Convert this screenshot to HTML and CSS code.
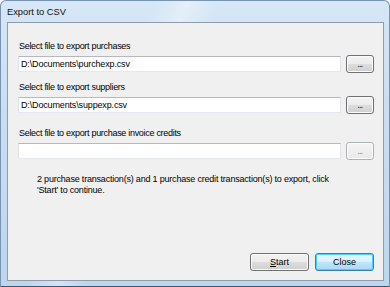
FILE: index.html
```html
<!DOCTYPE html>
<html lang="en">
<head>
  <meta charset="UTF-8">
  <title>Export to CSV</title>
  <meta name="viewport" content="width=device-width, initial-scale=1.0">
  <link rel="stylesheet" href="styles.css">
</head>
<body>

<!-- DIALOG WINDOW -->
<div class="window">
  <div class="titlebar">
    <span class="title">Export to CSV</span>
  </div>

  <div class="client">
    <div class="field first">
      <label class="field-label">Select file to export purchases</label>
      <div class="field-row">
        <div class="textbox">D:\Documents\purchexp.csv</div>
        <button class="browse">...</button>
      </div>
    </div>

    <div class="field second">
      <label class="field-label">Select file to export suppliers</label>
      <div class="field-row">
        <div class="textbox">D:\Documents\suppexp.csv</div>
        <button class="browse">...</button>
      </div>
    </div>

    <div class="field third">
      <label class="field-label">Select file to export purchase invoice credits</label>
      <div class="field-row">
        <div class="textbox"></div>
        <button class="browse disabled">...</button>
      </div>
    </div>

    <p class="message">2 purchase transaction(s) and 1 purchase credit transaction(s) to export, click<br>'Start' to continue.</p>

    <div class="actions">
      <button class="btn"><u>S</u>tart</button>
      <button class="btn default">Close</button>
    </div>
  </div>
</div>

</body>
</html>
```

FILE: styles.css
```css
* { margin: 0; padding: 0; box-sizing: border-box; }
body {
  font-family: "Liberation Sans", Arial, sans-serif;
  font-size: 9px;
  color: #000;
  background: #fff;
  width: 390px;
  height: 287px;
  overflow: hidden;
}

.window {
  width: 390px;
  height: 287px;
  display: flex;
  flex-direction: column;
  padding: 0 5px 5px 6px;
  border: 1px solid #7894b0;
  border-bottom-color: #3b5670;
  border-radius: 6px 6px 0 0;
  background:
    linear-gradient(115deg, rgba(255,255,255,0) 30%, rgba(255,255,255,0.35) 36%, rgba(255,255,255,0) 42%),
    linear-gradient(to bottom, #d6e7f6 0%, #c9def1 40%, #bdd6ee 100%);
}

.titlebar {
  height: 21px;
  display: flex;
  align-items: center;
}
.title {
  font-size: 9.3px;
  color: #111;
  padding-top: 1px;
}

.client {
  flex: 1;
  display: flex;
  flex-direction: column;
  background: #f0f0f0;
  border: 1px solid #8f9cab;
  padding: 18px 9px 9px 10px;
}

.field-label {
  display: block;
  line-height: 11px;
  height: 11px;
  padding-left: 1px;
  letter-spacing: -0.3px;
}
.field-row {
  display: flex;
  align-items: center;
  gap: 5px;
  height: 18px;
  margin-top: 3px;
}
.second { margin-top: 9px; }
.third { margin-top: 14px; }

.textbox {
  flex: 1;
  height: 16px;
  background: #fff;
  border: 1px solid;
  border-color: #b5b8bd #dfe3e8 #e5e9ee #dfe3e8;
  line-height: 14px;
  padding-left: 2px;
  white-space: nowrap;
  overflow: hidden;
  letter-spacing: -0.15px;
}

.browse {
  width: 28px;
  height: 18px;
  border: 1px solid #707070;
  border-radius: 3px;
  background: linear-gradient(to bottom, #f3f3f3 0%, #ebebeb 50%, #dddddd 51%, #cfcfcf 100%);
  box-shadow: inset 0 0 0 1px #fcfcfc;
  font-family: "Liberation Sans", Arial, sans-serif;
  font-size: 8px;
  font-weight: bold;
  color: #444;
  line-height: 10px;
  padding-top: 2px;
  letter-spacing: -0.5px;
}
.browse.disabled {
  border-color: #adb2b5;
  background: linear-gradient(to bottom, #f4f4f4, #e9e9e9);
  color: #9a9a9a;
}

.message {
  margin: 14px 0 0 19px;
  line-height: 10.5px;
  white-space: nowrap;
  letter-spacing: -0.2px;
}

.actions {
  margin-top: auto;
  display: flex;
  justify-content: flex-end;
  gap: 6px;
}
.btn {
  width: 59px;
  height: 18px;
  font-family: "Liberation Sans", Arial, sans-serif;
  font-size: 9px;
  color: #000;
  border: 1px solid #707070;
  border-radius: 3px;
  background: linear-gradient(to bottom, #f3f3f3 0%, #ebebeb 50%, #dddddd 51%, #cfcfcf 100%);
  box-shadow: inset 0 0 0 1px #fcfcfc;
}
.btn.default {
  border-color: #3c7fb1;
  background: linear-gradient(to bottom, #eaf6fd 0%, #d9f0fc 50%, #bee6fd 51%, #a7d9f5 100%);
  box-shadow: inset 0 0 0 1px #48d1ff;
}
```
